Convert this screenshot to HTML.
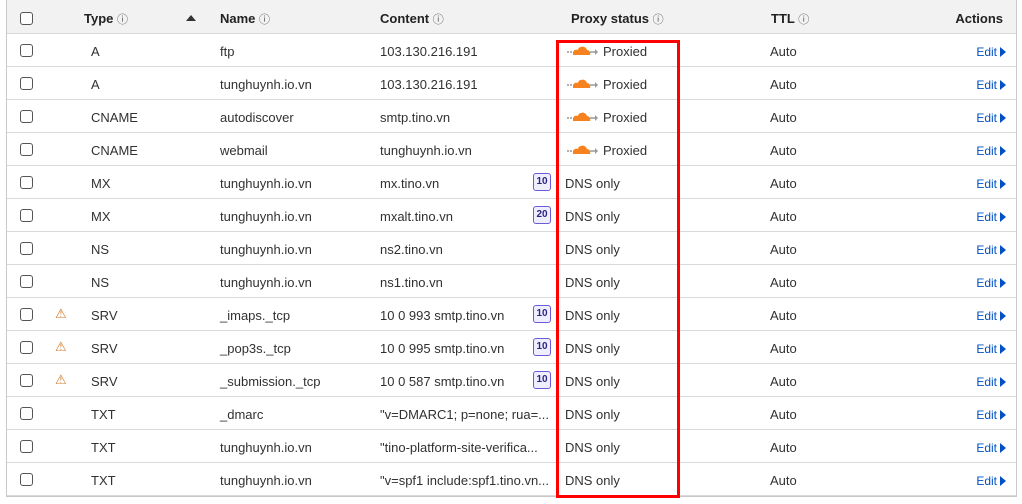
<!DOCTYPE html>
<html><head><meta charset="utf-8"><style>
*{margin:0;padding:0;box-sizing:border-box}
body{width:1022px;height:504px;background:#fff;font-family:"Liberation Sans",sans-serif;font-size:13px;color:#313131;position:relative;overflow:hidden}
.tbl{position:absolute;left:6px;top:0;width:1011px;height:497px;border-left:1px solid #c9c9c9;border-right:1px solid #c9c9c9;border-bottom:1px solid #c9c9c9}
.hd{position:absolute;left:7px;top:0;width:1009px;height:34px;background:#f2f2f2;border-bottom:1px solid #d9d9d9}
.r{position:absolute;left:7px;width:1009px;height:33px;border-bottom:1px solid #d9d9d9}
.t{position:absolute;white-space:nowrap}
.cb{position:absolute;left:14px;width:13px;height:13px;border:1px solid #555;border-radius:3px;background:#fff}
.b{font-weight:bold;color:#222}
.i{font-size:11px;font-weight:normal;color:#555}
.badge{position:absolute;left:526px;width:18px;height:18px;border:1px solid #6a5cd6;border-radius:3px;background:#efeefe;color:#2b2480;font-size:10px;font-weight:bold;text-align:center;line-height:16px}
.edit{position:absolute;right:10px;color:#0051c3;font-size:12px}
.edit:after{content:"";display:inline-block;margin-left:3px;border-left:6px solid #0051c3;border-top:5px solid transparent;border-bottom:5px solid transparent;vertical-align:-1px}
.red{position:absolute;left:556px;top:40px;width:124px;height:458px;border:3px solid #f00}
</style></head><body>
<div class="hd"></div>
<div class="tbl"></div>
<div class="cb" style="left:20px;top:12px"></div>
<div class="t b" style="left:84px;top:11px">Type <span class="i">ⓘ</span></div>
<div style="position:absolute;left:186px;top:15px;border-bottom:6px solid #333;border-left:5px solid transparent;border-right:5px solid transparent"></div>
<div class="t b" style="left:220px;top:11px">Name <span class="i">ⓘ</span></div>
<div class="t b" style="left:380px;top:11px">Content <span class="i">ⓘ</span></div>
<div class="t b" style="left:571px;top:11px">Proxy status <span class="i">ⓘ</span></div>
<div class="t b" style="left:771px;top:11px">TTL <span class="i">ⓘ</span></div>
<div class="t b" style="right:19px;top:11px">Actions</div>

<div id="rows"></div>
<script>
var d=[["A","ftp","103.130.216.191","",1,0],["A","tunghuynh.io.vn","103.130.216.191","",1,0],["CNAME","autodiscover","smtp.tino.vn","",1,0],["CNAME","webmail","tunghuynh.io.vn","",1,0],["MX","tunghuynh.io.vn","mx.tino.vn","10",0,0],["MX","tunghuynh.io.vn","mxalt.tino.vn","20",0,0],["NS","tunghuynh.io.vn","ns2.tino.vn","",0,0],["NS","tunghuynh.io.vn","ns1.tino.vn","",0,0],["SRV","_imaps._tcp","10 0 993 smtp.tino.vn","10",0,1],["SRV","_pop3s._tcp","10 0 995 smtp.tino.vn","10",0,1],["SRV","_submission._tcp","10 0 587 smtp.tino.vn","10",0,1],["TXT","_dmarc","\"v=DMARC1; p=none; rua=...","",0,0],["TXT","tunghuynh.io.vn","\"tino-platform-site-verifica...","",0,0],["TXT","tunghuynh.io.vn","\"v=spf1 include:spf1.tino.vn...","",0,0]];
var h="";
d.forEach(function(r,i){var y=34+i*33;
h+='<div class="r" style="top:'+y+'px">'+
'<div class="cb" style="top:10px;left:13px"></div>'+
(r[5]?'<div class="t" style="left:48px;top:8px;color:#d0782a;font-size:13px">⚠</div>':'')+
'<div class="t" style="left:84px;top:10px">'+r[0]+'</div>'+
'<div class="t" style="left:213px;top:10px">'+r[1]+'</div>'+
'<div class="t" style="left:373px;top:10px">'+r[2]+'</div>'+
(r[3]?'<div class="badge" style="top:7px">'+r[3]+'</div>':'')+
(r[4]?'<svg style="position:absolute;left:560px;top:9px" width="32" height="14" viewBox="0 0 32 14"><line x1="0" y1="9" x2="6" y2="9" stroke="#999" stroke-width="1.5" stroke-dasharray="2 1"/><path d="M6 12h17c1-3-1-5-3-5c-1-3-4-4-6-3c-2 0-3 2-3 3c-2-1-4 0-5 2z" fill="#f6821f"/><line x1="23" y1="9" x2="29" y2="9" stroke="#999" stroke-width="1.5"/><path d="M28 6l3 3l-3 3z" fill="#999"/></svg><div class="t" style="left:596px;top:10px">Proxied</div>':'<div class="t" style="left:558px;top:10px">DNS only</div>')+
'<div class="t" style="left:763px;top:10px">Auto</div>'+
'<div class="t edit" style="top:11px">Edit</div></div>';});
document.getElementById("rows").innerHTML=h;
</script>
<div class="red"></div>
</body></html>
